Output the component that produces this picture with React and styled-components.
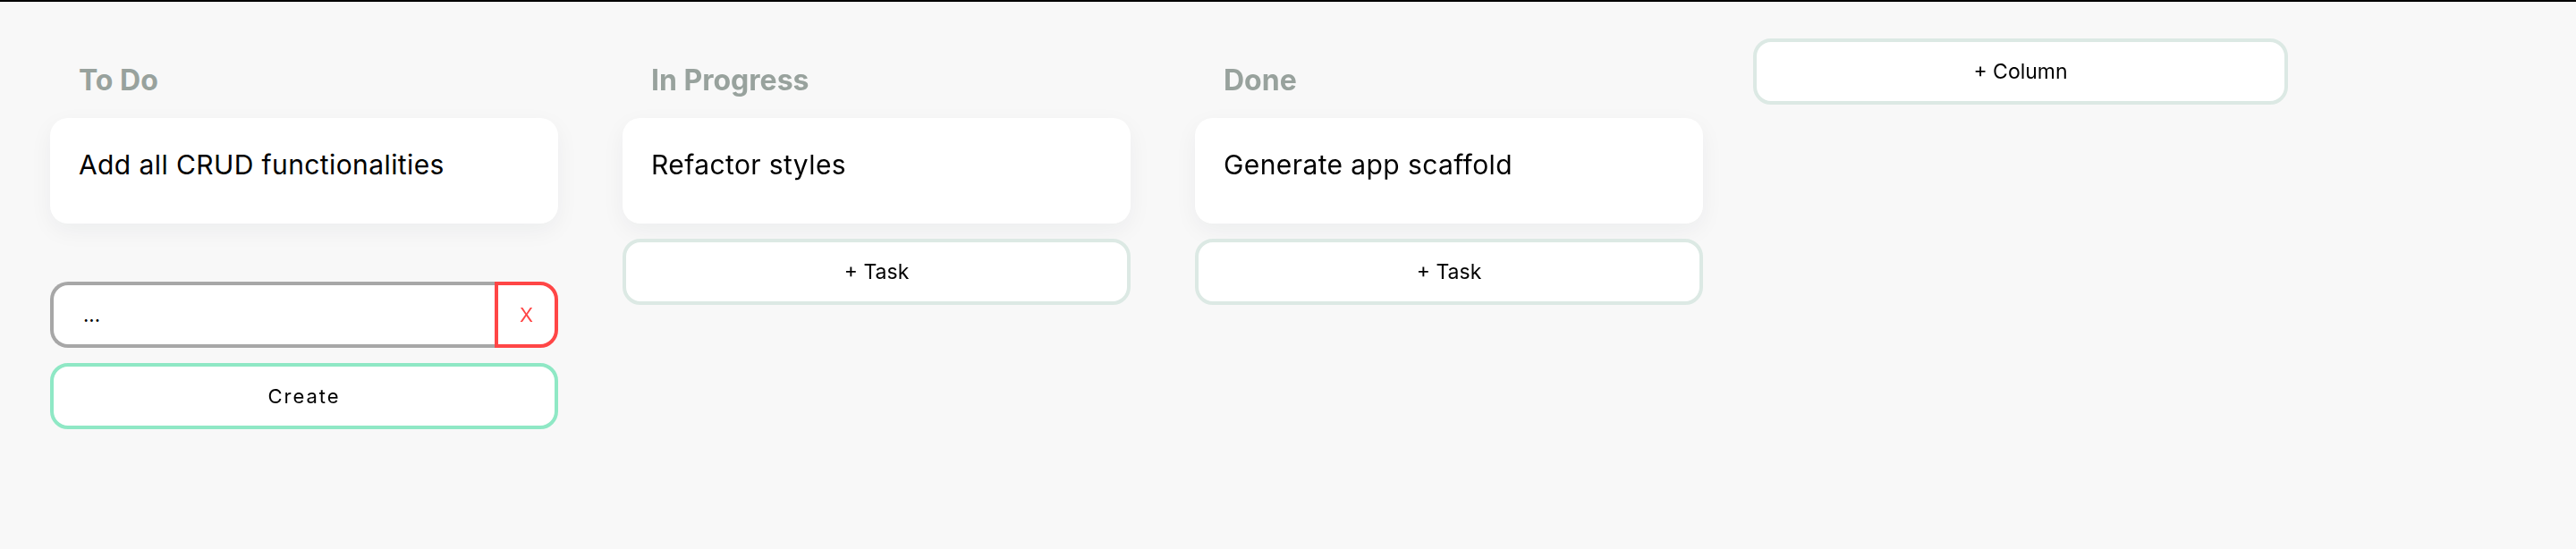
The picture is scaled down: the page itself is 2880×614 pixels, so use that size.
import React, { useState } from "react";
import styled, { createGlobalStyle } from "styled-components";

const GlobalStyle = createGlobalStyle`
  html, body {
    margin: 0;
    padding: 0;
    background: #f8f8f8;
    font-family: Inter, "Liberation Sans", sans-serif;
    color: #000;
  }
  body {
    border-top: 2px solid #000;
    min-height: 612px;
  }
`;

const initialColumns = [
  { id: "todo", title: "To Do", tasks: ["Add all CRUD functionalities"], adding: true },
  { id: "progress", title: "In Progress", tasks: ["Refactor styles"] },
  { id: "done", title: "Done", tasks: ["Generate app scaffold"] },
];

const App = () => {
  const [columns] = useState(initialColumns);
  const [draft, setDraft] = useState("...");

  return (
    <>
      <GlobalStyle />
      <Board>
        {columns.map((column) => (
          <Column key={column.id}>
            <ColumnTitle>{column.title}</ColumnTitle>
            {column.tasks.map((task) => (
              <TaskCard key={task}>{task}</TaskCard>
            ))}
            {column.adding ? (
              <NewTaskForm onSubmit={(e) => e.preventDefault()}>
                <InputRow>
                  <TaskInput
                    autoFocus
                    value={draft}
                    onChange={(e) => setDraft(e.target.value)}
                  />
                  <CancelButton type="button">X</CancelButton>
                </InputRow>
                <CreateButton type="submit">Create</CreateButton>
              </NewTaskForm>
            ) : (
              <AddButton type="button">+ Task</AddButton>
            )}
          </Column>
        ))}
        <AddColumnButton type="button">+ Column</AddColumnButton>
      </Board>
    </>
  );
};

export default App;

const Board = styled.div`
  display: flex;
  align-items: flex-start;
  gap: 40px;
  padding: 41px 40px;
`;

const Column = styled.div`
  width: 600px;
  box-sizing: border-box;
  padding: 27px 16px 16px;
  display: flex;
  flex-direction: column;
`;

const ColumnTitle = styled.h2`
  margin: 0 0 23px;
  padding: 0 32px;
  font-size: 32px;
  line-height: 39px;
  font-weight: 700;
  color: #98a29d;
`;

const TaskCard = styled.div`
  box-sizing: border-box;
  height: 118px;
  padding: 34px 32px 0;
  background: #fff;
  border-radius: 20px;
  box-shadow: 0 8px 26px rgba(20, 30, 60, 0.05);
  font-size: 30px;
  line-height: 36px;
  letter-spacing: 0.4px;
`;

const ButtonBase = styled.button`
  box-sizing: border-box;
  height: 74px;
  width: 100%;
  background: #fff;
  border: 4px solid #dce9e4;
  border-radius: 20px;
  font-family: Inter, "Liberation Sans", sans-serif;
  font-size: 23px;
  color: #000;
  cursor: pointer;
`;

const AddButton = styled(ButtonBase)`
  margin-top: 17px;
`;

const AddColumnButton = styled(ButtonBase)`
  width: 598px;
  flex-shrink: 0;
`;

const NewTaskForm = styled.form`
  margin-top: 65px;
  display: flex;
  flex-direction: column;
  gap: 17px;
`;

const InputRow = styled.div`
  display: flex;
  height: 74px;
`;

const TaskInput = styled.input`
  flex: 1;
  min-width: 0;
  box-sizing: border-box;
  height: 100%;
  padding: 0 33px;
  border: 4px solid #a7a7a7;
  border-right: none;
  border-radius: 20px 0 0 20px;
  background: #fff;
  font-family: Inter, "Liberation Sans", sans-serif;
  font-size: 22px;
  color: #000;
  caret-color: #000;
  outline: none;
`;

const CancelButton = styled.button`
  box-sizing: border-box;
  width: 71px;
  height: 100%;
  border: 4px solid #ff4646;
  border-radius: 0 20px 20px 0;
  background: #fff;
  color: #ff4646;
  font-family: Inter, "Liberation Sans", sans-serif;
  font-size: 22px;
  cursor: pointer;
`;

const CreateButton = styled(ButtonBase)`
  border-color: #8fe8c5;
  font-size: 22px;
  letter-spacing: 2px;
`;
